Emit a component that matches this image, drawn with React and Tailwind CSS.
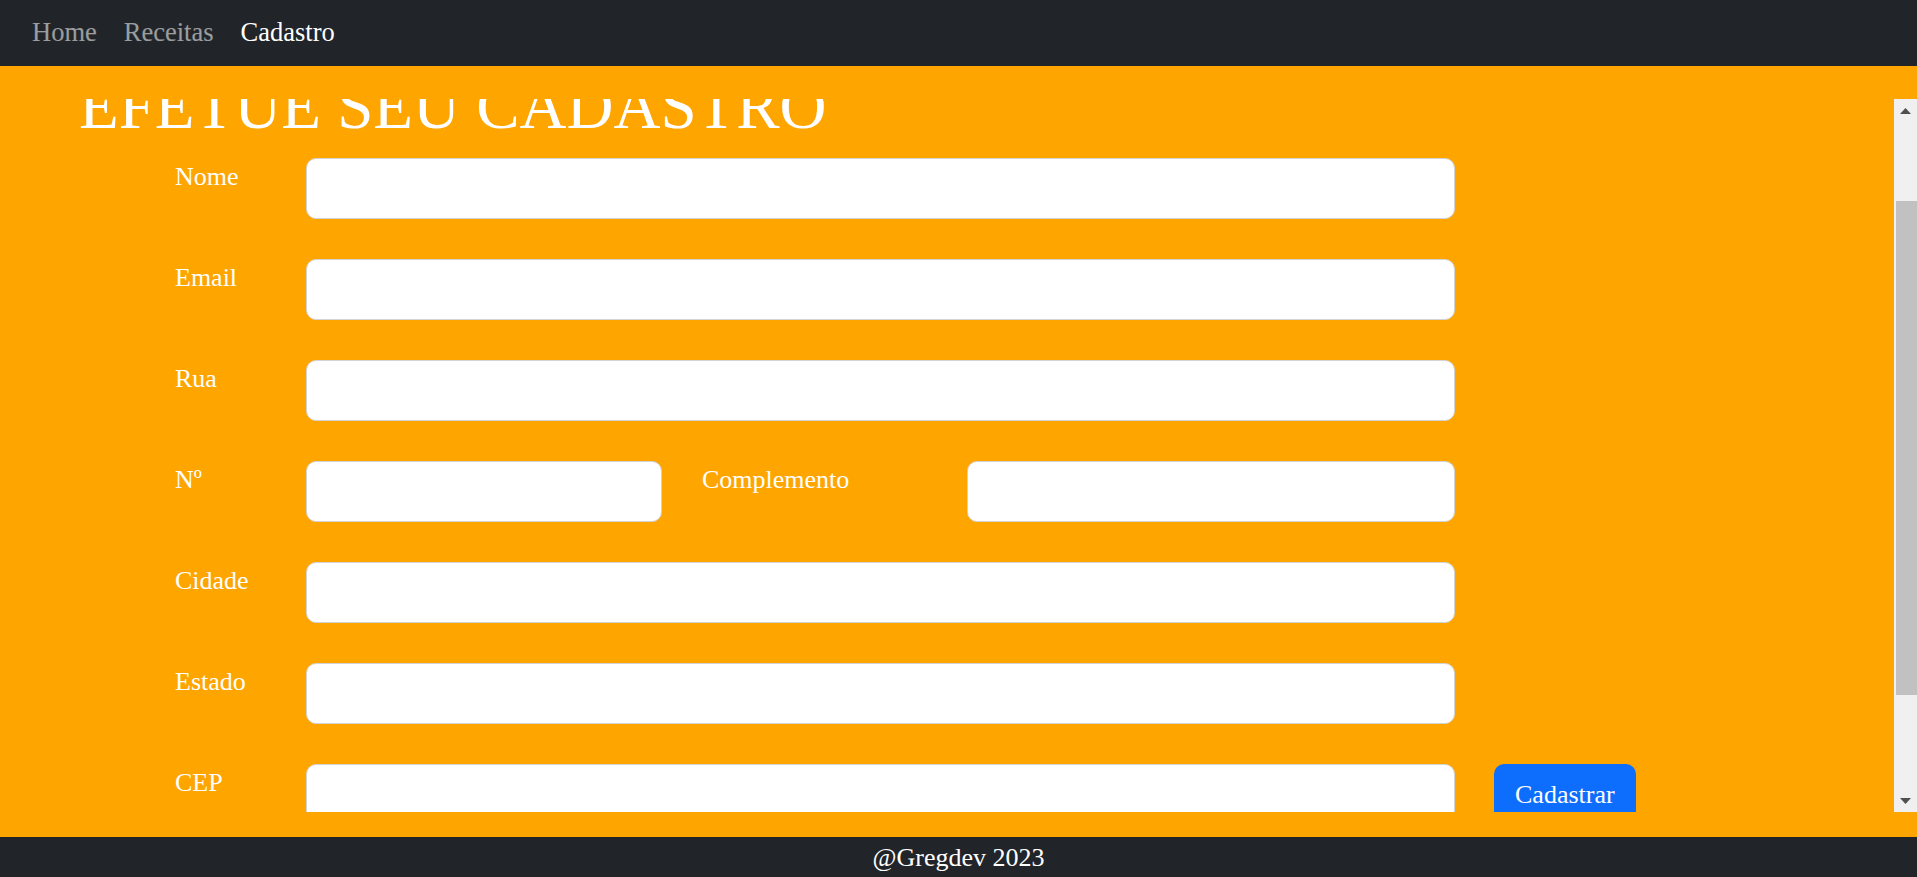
import React, { useEffect, useRef } from 'react';

const fields = [
  { label: 'Nome' },
  { label: 'Email' },
  { label: 'Rua' },
];

const lowerFields = [
  { label: 'Cidade' },
  { label: 'Estado' },
];

const inputClass =
  'h-[61px] bg-white border border-[#d3d3d3] rounded-[10px] outline-none px-[16px] text-[26px]';

const Label = ({ children, className = '' }) => (
  <label className={`text-white text-[26px] leading-[30px] pt-[4px] ${className}`}>{children}</label>
);

// fake classic scrollbar, the real one is hidden in the screenshot browser
const ScrollBar = () => (
  <div className="w-[23px] bg-[#f0f0f0] flex flex-col shrink-0">
    <div className="h-[23px] flex items-center justify-center">
      <svg width="11" height="6" viewBox="0 0 11 6">
        <polygon points="5.5,0 11,6 0,6" fill="#505050" />
      </svg>
    </div>
    <div className="h-[79px]" />
    <div className="h-[494px] ml-[2px] bg-[#c1c1c1]" />
    <div className="flex-1" />
    <div className="h-[23px] flex items-center justify-center">
      <svg width="11" height="6" viewBox="0 0 11 6">
        <polygon points="0,0 11,0 5.5,6" fill="#505050" />
      </svg>
    </div>
  </div>
);

export default function App() {
  const scrollRef = useRef(null);

  useEffect(() => {
    if (scrollRef.current) scrollRef.current.scrollTop = 29;
  }, []);

  return (
    <div className="h-[877px] bg-[#ffa500] flex flex-col font-['Liberation_Serif',serif]">
      <nav className="h-[66px] bg-[#212529] flex items-center pl-[32px] gap-[27px] text-[26.5px]">
        <a href="#" className="text-white/55">Home</a>
        <a href="#" className="text-white/55">Receitas</a>
        <a href="#" className="text-white">Cadastro</a>
      </nav>

      <main className="mt-[33px] h-[713px] flex">
        <div ref={scrollRef} className="flex-1 overflow-y-auto [scrollbar-width:none]">
          <h1 className="pl-[79px] text-white text-[65px] leading-[72px] font-normal">EFETUE SEU CADASTRO</h1>

          <form className="mt-[16px] pl-[175px] pb-[200px] flex flex-col gap-[40px]">
            {fields.map((f) => (
              <div key={f.label} className="flex items-start">
                <Label className="w-[131px]">{f.label}</Label>
                <input type="text" className={`${inputClass} w-[1149px]`} />
              </div>
            ))}

            <div className="flex items-start">
              <Label className="w-[131px]">Nº</Label>
              <input type="text" className={`${inputClass} w-[356px]`} />
              <Label className="ml-[40px] w-[265px]">Complemento</Label>
              <input type="text" className={`${inputClass} w-[488px]`} />
            </div>

            {lowerFields.map((f) => (
              <div key={f.label} className="flex items-start">
                <Label className="w-[131px]">{f.label}</Label>
                <input type="text" className={`${inputClass} w-[1149px]`} />
              </div>
            ))}

            <div className="flex items-start">
              <Label className="w-[131px]">CEP</Label>
              <input type="text" className={`${inputClass} w-[1149px]`} />
              <button
                type="button"
                className="ml-[39px] bg-[#0d6efd] text-white text-[26px] leading-[39px] py-[11px] px-[21px] rounded-[10px]"
              >
                Cadastrar
              </button>
            </div>
          </form>
        </div>
        <ScrollBar />
      </main>

      <footer className="mt-[25px] h-[40px] bg-[#212529] text-white text-[26px] flex items-center justify-center">
        @Gregdev 2023
      </footer>
    </div>
  );
}
